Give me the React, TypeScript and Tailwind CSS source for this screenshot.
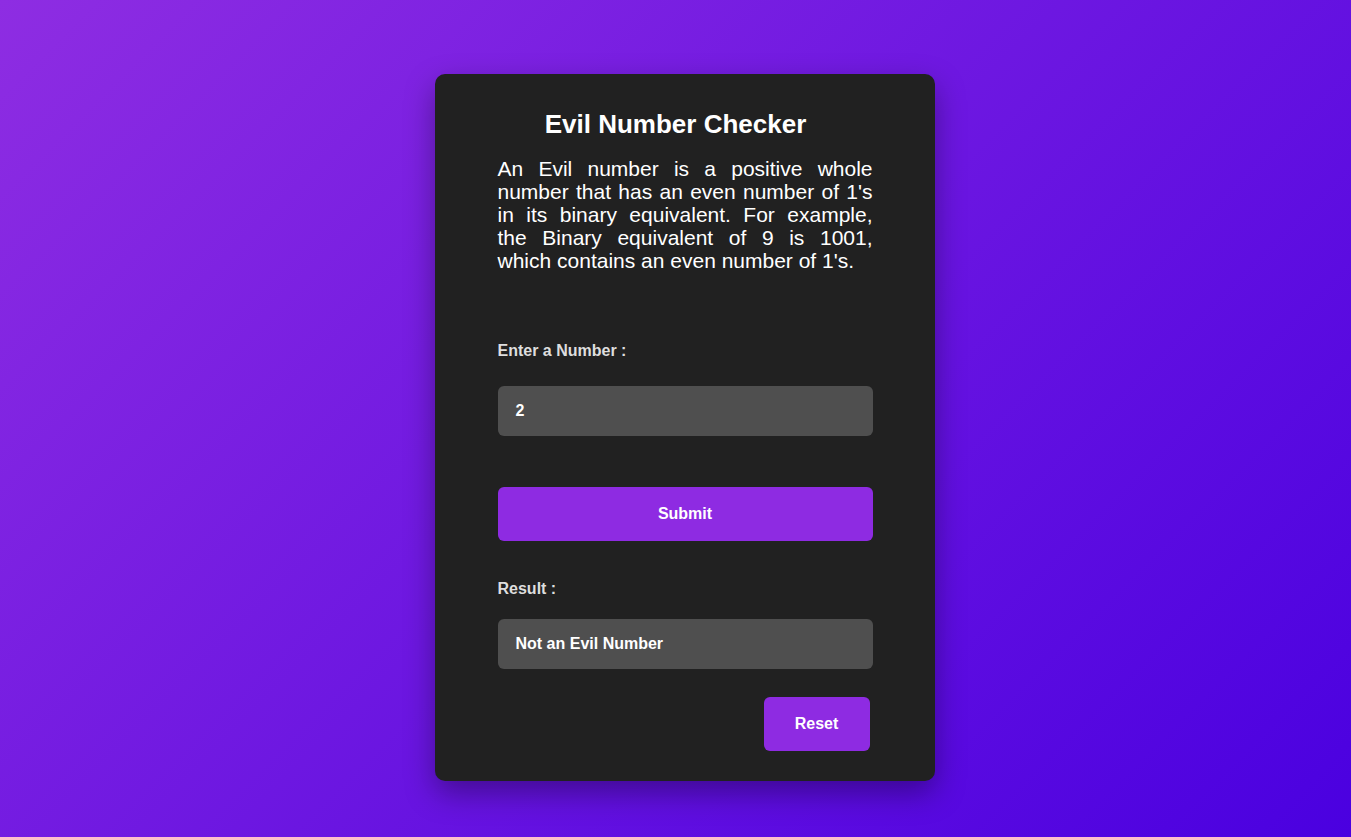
import React from "react";

export default function App() {
  return (
    <div
      className="min-h-[837px] w-full bg-[linear-gradient(135deg,#8e2de2,#4a00e0)] flex justify-center items-start pt-[74px] pl-[19px]"
      style={{ fontFamily: '"Liberation Sans", Arial, sans-serif' }}
    >
      <div className="w-[500px] bg-[#212121] rounded-[10px] shadow-[0_12px_30px_rgba(0,0,0,0.35)] pt-[35px] pb-[30px] flex flex-col items-center">
        <div className="w-[375px] flex flex-col">
          <h1 className="text-[26px] leading-[30px] font-bold text-white text-center pr-[19px]">
            Evil Number Checker
          </h1>
          <p className="mt-[18px] text-[21px] leading-[23px] text-white text-justify">
            An Evil number is a positive whole number that has an even number of 1's in its binary equivalent. For example, the Binary equivalent of 9 is 1001, which contains an even number of 1's.
          </p>
          <label className="mt-[70px] text-[16px] leading-[18px] font-bold text-[#dedede]">
            Enter a Number :
          </label>
          <div className="mt-[26px] h-[50px] rounded-[6px] bg-[#4f4f4f] flex items-center px-[18px] text-[16px] font-bold text-white">
            2
          </div>
          <button className="mt-[51px] h-[54px] rounded-[6px] bg-[#8e2be2] text-white text-[16px] font-bold">
            Submit
          </button>
          <label className="mt-[39px] text-[16px] leading-[18px] font-bold text-[#dedede]">
            Result :
          </label>
          <div className="mt-[21px] h-[50px] rounded-[6px] bg-[#4f4f4f] flex items-center px-[18px] text-[16px] font-bold text-white">
            Not an Evil Number
          </div>
          <button className="mt-[28px] self-end mr-[3px] w-[106px] h-[54px] rounded-[6px] bg-[#8e2be2] text-white text-[16px] font-bold">
            Reset
          </button>
        </div>
      </div>
    </div>
  );
}
